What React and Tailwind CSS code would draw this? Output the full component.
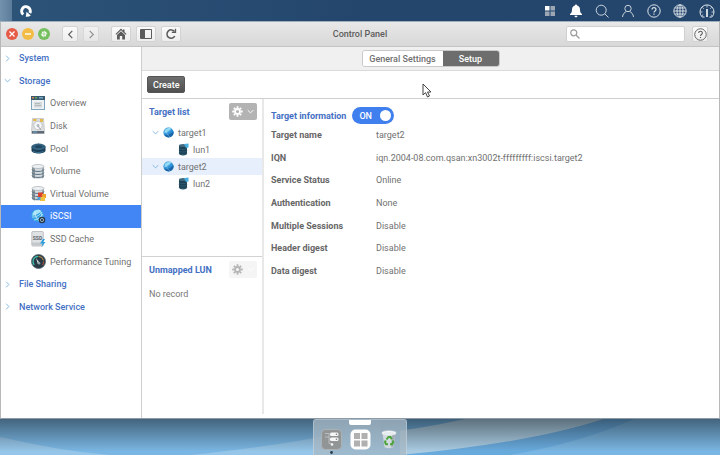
import { useState } from "react";
import clsx from "clsx";

const SIDEBAR = [
  { label: "System", group: true },
  { label: "Storage", group: true, open: true },
  { label: "Overview", icon: OverviewIcon },
  { label: "Disk", icon: DiskIcon },
  { label: "Pool", icon: PoolIcon },
  { label: "Volume", icon: VolumeIcon },
  { label: "Virtual Volume", icon: VirtualVolumeIcon },
  { label: "iSCSI", icon: IscsiIcon },
  { label: "SSD Cache", icon: SsdIcon },
  { label: "Performance Tuning", icon: GaugeIcon },
  { label: "File Sharing", group: true },
  { label: "Network Service", group: true },
];

const TARGETS = [
  { name: "target1", lun: "lun1" },
  { name: "target2", lun: "lun2" },
];

const DETAILS = [
  ["Target name", "target2"],
  ["IQN", "iqn.2004-08.com.qsan:xn3002t-fffffffff:iscsi.target2"],
  ["Service Status", "Online"],
  ["Authentication", "None"],
  ["Multiple Sessions", "Disable"],
  ["Header digest", "Disable"],
  ["Data digest", "Disable"],
];

/* ---------- icons ---------- */

function Chevron({ dir = "right", className }) {
  const paths = { right: "M3 1l4 4-4 4", left: "M7 1L3 5l4 4", down: "M1 3l4 4 4-4" };
  return (
    <svg viewBox="0 0 10 10" className={className} fill="none" stroke="currentColor" strokeWidth="1.300">
      <path d={paths[dir]} />
    </svg>
  );
}

function OverviewIcon() {
  return (
    <svg viewBox="0 0 14 14" className="size-[14px]">
      <rect x="0.5" y="0.5" width="13" height="13" fill="#eef2f5" stroke="#7fa5bd" />
      <rect width="14" height="4" fill="#3d5a6c" />
      <rect x="1" y="1" width="2" height="1.5" fill="#d9844f" />
      <rect x="4" y="1" width="2" height="1.5" fill="#68ab5c" />
      <rect x="8" y="1" width="4" height="1.5" fill="#6cacc9" />
      <rect x="3" y="6" width="8" height="5.5" fill="#d3d8db" />
      <path d="M4 7.500h5M4 9.500h6" stroke="#a5adb2" strokeWidth=".7" />
    </svg>
  );
}

function DiskIcon() {
  return (
    <svg viewBox="0 0 14 16" className="h-4 w-[14px]">
      <path d="M1.500 .5h11l1 12v3H.5v-3z" fill="#dcdedf" stroke="#b4b7b9" strokeWidth=".6" />
      <path d="M2 1h3.500v2H2zM9 1h3v3H9z" fill="#e4b94e" />
      <circle cx="7" cy="7.500" r="4.200" fill="#f4f5f6" stroke="#b4b8bb" strokeWidth=".7" />
      <circle cx="7" cy="7.500" r="1.400" fill="#b8bcc0" />
      <path d="M7 8l3 4" stroke="#9da1a5" />
      <rect x="1" y="13" width="12" height="2.500" fill="#5e6b76" />
      <path d="M2 14h4" stroke="#65a8d6" />
    </svg>
  );
}

function PoolIcon() {
  return (
    <svg viewBox="0 0 15 11" className="h-[11px] w-[15px]">
      <path d="M.5 3.500v4c0 4 14 4 14 0v-4z" fill="#1d4059" />
      <ellipse cx="7.500" cy="3.700" rx="7" ry="3.200" fill="#356482" />
      <ellipse cx="7.500" cy="3.700" rx="3.500" ry="1.400" fill="#20465f" />
      <path d="M2 8.200c3 1.800 7 1.800 10.500 .2" stroke="#4180a5" fill="none" strokeWidth=".8" />
      <path d="M7.500 .5v2M.7 3.700h3M11 3.700h3.300" stroke="#27506c" strokeWidth=".6" />
    </svg>
  );
}

function Cylinder() {
  return (
    <>
      <path d="M1 2.500v10c0 3 12 3 12 0v-10z" fill="#d5dade" />
      <path d="M1 2.500v10c0 1.200 2 1.800 3 2v-10z" fill="#8a949b" />
      <path d="M11 4.500v10c1-.3 2-.9 2-2v-10z" fill="#99a3aa" />
      <path
        d="M1 5.500c0 2.600 12 2.600 12 0M1 8.500c0 2.600 12 2.600 12 0M1 11.500c0 2.600 12 2.600 12 0"
        fill="none"
        stroke="#5c7585"
      />
      <ellipse cx="7" cy="2.500" rx="6" ry="2" fill="#edf0f2" stroke="#9aa3a9" strokeWidth=".6" />
    </>
  );
}

function VolumeIcon() {
  return (
    <svg viewBox="0 0 14 15" className="h-[15px] w-[14px]">
      <Cylinder />
    </svg>
  );
}

function VirtualVolumeIcon() {
  return (
    <svg viewBox="0 0 16 15" className="h-[15px] w-4">
      <Cylinder />
      <rect x="7" y="6.500" width="5" height="5.500" fill="#d9432f" />
      <rect x="11" y="8" width="4" height="4" fill="#f0a22e" />
      <rect x="9" y="11" width="5" height="4" fill="#f3c23c" />
      <rect x="6.500" y="11" width="3" height="3" fill="#4d9fd6" />
    </svg>
  );
}

function Globe({ className }) {
  return (
    <svg viewBox="0 0 14 14" className={className}>
      <circle cx="7" cy="7" r="6.500" fill="#2c90d6" />
      <path d="M1.500 10a6.500 6.500 0 0 0 11.300 0c.8-2 .8-3.500.2-5C11 8 7 11 1.500 10z" fill="#1a66a8" />
      <path d="M2 4.500C4 1 8 .2 10.500 1.500 9 4 6 6.500 2 7.500z" fill="#8fdaf5" />
      <path
        d="M1 7.500c4 .5 8-2 10-5.700M4 1.800c-.5 4 1.500 8.500 5 11.200"
        fill="none"
        stroke="#a5dcf5"
        strokeWidth=".5"
      />
    </svg>
  );
}

function IscsiIcon() {
  return (
    <svg viewBox="0 0 15 15" className="size-[15px]">
      <circle cx="6.500" cy="6.500" r="6.200" fill="#35a5e4" />
      <path d="M1.500 4.500C3 1 7 0 10 1.500 9 4 6 6 1.500 7z" fill="#a6e2f8" />
      <path
        d="M1 8c4 .5 8-2 10-5M3 11c4-.5 7-3 9-6M4 1.500c-.5 4 1 7.500 4 10.500M8 .8c2 2 3 5 2.500 8"
        fill="none"
        stroke="#d3f0fc"
        strokeWidth=".7"
      />
      <circle cx="11" cy="11" r="3.300" fill="#26394b" />
      <circle cx="11" cy="11" r="1.600" fill="none" stroke="#a9bccb" strokeWidth=".9" />
    </svg>
  );
}

function SsdIcon() {
  return (
    <svg viewBox="0 0 15 16" className="h-4 w-[15px]">
      <rect x=".8" y=".5" width="11.500" height="14.500" rx="1" fill="#dfe2e4" stroke="#a9adb0" strokeWidth=".7" />
      <rect x="1" y="11.500" width="11" height="3" fill="#c3c7ca" />
      <text
        x="6.500"
        y="8.500"
        textAnchor="middle"
        fontSize="5"
        fontWeight="700"
        fontFamily="Roboto, sans-serif"
        fill="#59646c"
      >
        SSD
      </text>
      <path d="M12 8l-3 4.500h2.500l-1 3.500 4-5h-2.300L14 8z" fill="#2b9fe0" />
    </svg>
  );
}

function GaugeIcon() {
  return (
    <svg viewBox="0 0 15 15" className="size-[15px]">
      <circle cx="7.500" cy="7.500" r="7" fill="#293a44" stroke="#56666f" strokeWidth=".8" />
      <path d="M3.300 11A5.200 5.200 0 0 1 7 2.400" fill="none" stroke="#3cc3b4" strokeWidth="1.100" />
      <path d="M7.500 2.400a5.200 5.200 0 0 1 5 4" fill="none" stroke="#d9a346" strokeWidth=".9" />
      <path d="M12.500 7.500A5 5 0 0 1 11.500 11" fill="none" stroke="#d2553c" strokeWidth=".9" />
      <path d="M5 4l4 5.500L7 10z" fill="#e8f2f4" />
      <circle cx="8" cy="9.300" r="1.300" fill="#8ea5ae" />
    </svg>
  );
}

function LunIcon() {
  return (
    <svg viewBox="0 0 11 13" className="h-[13px] w-[11px]">
      <path d="M1 2.500v8c0 2.500 8 2.500 8 0v-8z" fill="#1d4256" />
      <path
        d="M1 5c0 2 8 2 8 0M1 7.500c0 2 8 2 8 0M1 10c0 2 8 2 8 0"
        fill="none"
        stroke="#3d687f"
        strokeWidth=".6"
      />
      <ellipse cx="5" cy="2.500" rx="4" ry="1.500" fill="#416a80" />
      <path d="M6 1l4.500-.5v4L8 5z" fill="#48aee0" />
    </svg>
  );
}

function GearIcon({ className }) {
  return (
    <svg viewBox="0 0 12 12" className={className} fill="none" stroke="currentColor" strokeWidth="2">
      <circle cx="6" cy="6" r="2.700" />
      <path d="M6 .3v2M6 9.700v2M.3 6h2M9.700 6h2M2 2l1.400 1.400M8.600 8.600L10 10M10 2L8.600 3.400M3.400 8.600L2 10" />
    </svg>
  );
}

function QuestionIcon({ className }) {
  return (
    <svg viewBox="0 0 14 14" className={className} fill="none" stroke="currentColor">
      <circle cx="7" cy="7" r="6.200" />
      <path d="M5 5.500c0-2.600 4-2.600 4 0 0 1.400-2 1.500-2 3M7 9.600v1.200" strokeWidth="1.200" />
    </svg>
  );
}

/* ---------- menu bar ---------- */

const TRAY = [
  {
    name: "Monitor",
    icon: (
      <svg viewBox="0 0 14 14" className="size-[14px]">
        <path d="M2 2h4.500v4.500H2z" fill="#fff" />
        <path d="M7.500 2H12v4.500H7.500zM2 7.500h4.500V12H2zM7.500 7.500H12V12H7.500z" fill="#9da6b3" />
      </svg>
    ),
  },
  {
    name: "Notifications",
    icon: (
      <svg viewBox="0 0 14 14" className="size-[14px]" fill="#fff">
        <path d="M7 .5c.6 0 1 .4 1 1 2 .5 3 2 3 4 0 2.500.5 3.500 2 4.500v1H1v-1c1.500-1 2-2 2-4.500 0-2 1-3.500 3-4 0-.6.4-1 1-1zM5.500 11.800h3c0 2-3 2-3 0z" />
      </svg>
    ),
  },
  {
    name: "Search",
    icon: (
      <svg viewBox="0 0 14 14" className="size-[14px]" fill="none" stroke="#c8d2de">
        <circle cx="6.200" cy="6.200" r="5" />
        <path d="M9.800 9.800l3.700 3.700" />
      </svg>
    ),
  },
  {
    name: "Account",
    icon: (
      <svg viewBox="0 0 14 14" className="size-[14px]" fill="none" stroke="#c8d2de">
        <circle cx="7" cy="4.500" r="3.200" />
        <path d="M1.500 13c.3-3 2-4.700 4-5.500M12.500 13c-.3-3-2-4.700-4-5.500" />
      </svg>
    ),
  },
  { name: "Help", icon: <QuestionIcon className="size-[14px] text-[#dbe2ea]" /> },
  {
    name: "Language",
    icon: (
      <svg viewBox="0 0 14 14" className="size-[14px]" fill="none" stroke="#e3e9ef" strokeWidth=".9">
        <circle cx="7" cy="7" r="6.200" />
        <ellipse cx="7" cy="7" rx="3" ry="6.200" />
        <path d="M7 1v12M1 7h12M1.700 4h10.600M1.700 10h10.600" />
      </svg>
    ),
  },
  {
    name: "Dashboard",
    icon: (
      <svg viewBox="0 0 16 14" className="h-[14px] w-4" fill="none" stroke="#e3e9ef">
        <path d="M5.500 13H3.200A7 7 0 1 1 12.800 13h-2.300" />
        <path
          d="M8 1.500v2M3.500 3.500l1.200 1.200M12.500 3.500l-1.200 1.200M1.500 8h2M12.500 8h2M3 11.500l1.200-.7M13 11.500l-1.200-.7"
          strokeWidth=".8"
        />
        <path d="M8 5v8" strokeWidth="1.800" />
      </svg>
    ),
  },
];

function MenuBar() {
  return (
    <header className="flex h-[21px] shrink-0 items-center bg-gradient-to-r from-[#2c5378] via-[#24466d] to-[#24466c]">
      <div className="h-full w-3 bg-gradient-to-r from-[#7392ad] to-[#5b7c9a]" />
      <button type="button" aria-label="Main menu" className="ml-[7px]">
        <svg viewBox="0 0 14 14" className="size-[14px]" fill="none" stroke="#fff">
          <path d="M4.300 10.400A4.300 4.300 0 1 1 10.800 9" strokeWidth="3" />
          <path d="M7.500 7.800l4.300 3.700a6.500 6.500 0 0 1-5 1.200z" fill="#fff" stroke="none" />
        </svg>
      </button>
      <nav className="ml-auto flex items-center gap-3 pr-[5px]">
        {TRAY.map((item) => (
          <button key={item.name} type="button" aria-label={item.name}>
            {item.icon}
          </button>
        ))}
      </nav>
    </header>
  );
}

/* ---------- window ---------- */

function BarButton({ label, className, children }) {
  return (
    <button
      type="button"
      aria-label={label}
      className={clsx(
        "flex h-4 items-center justify-center rounded-[2px] border border-[#d3d3d3] bg-gradient-to-b from-[#fafafa] to-[#eeeeee] text-[#5c5c5c]",
        className
      )}
    >
      {children}
    </button>
  );
}

function TitleBar() {
  return (
    <div className="grid h-[25px] shrink-0 grid-cols-[1fr_auto_1fr] items-center border-b border-[#c4c4c4] bg-gradient-to-b from-[#e8e8e8] to-[#d8d8d8]">
      <div className="flex items-center pl-[5px]">
        <div className="flex gap-1">
          <button type="button" aria-label="Close">
            <svg viewBox="0 0 12 12" className="size-3" stroke="#fff" strokeWidth="1.200">
              <circle cx="6" cy="6" r="6" fill="#e65a46" stroke="none" />
              <path d="M3.500 3.500l5 5M8.500 3.500l-5 5" />
            </svg>
          </button>
          <button type="button" aria-label="Minimize">
            <svg viewBox="0 0 12 12" className="size-3" stroke="#fff" strokeWidth="1.400">
              <circle cx="6" cy="6" r="6" fill="#f3bd45" stroke="none" />
              <path d="M3 6h6" />
            </svg>
          </button>
          <button type="button" aria-label="Maximize">
            <svg viewBox="0 0 12 12" className="size-3" fill="#fff">
              <circle cx="6" cy="6" r="6" fill="#76bf5e" />
              <path d="M6.300 2.500v3.200h3.200L8.300 4.500zM5.700 9.500V6.300H2.500l1.200 1.200zM4.500 3.500h1.200v2.200H3.500zM7.500 8.500H6.300V6.300h2.200z" />
            </svg>
          </button>
        </div>
        <BarButton label="Back" className="ml-3 w-4">
          <Chevron dir="left" className="size-[9px]" />
        </BarButton>
        <BarButton label="Forward" className="ml-[5px] w-4 opacity-60">
          <Chevron className="size-[9px]" />
        </BarButton>
        <BarButton label="Home" className="ml-3 w-5">
          <svg viewBox="0 0 12 12" className="size-3" fill="currentColor">
            <path d="M6 .5L.5 6l.8.8L6 2.200l4.700 4.600.8-.8L9.500 4V1.500H8v1z" />
            <path d="M6 3.200L2 7v4.500h2.800V8h2.400v3.500H10V7z" />
          </svg>
        </BarButton>
        <BarButton label="Toggle sidebar" className="ml-[5px] w-5">
          <svg viewBox="0 0 12 12" className="size-3">
            <path d="M.5 1.500h11v9H.5z" fill="none" stroke="currentColor" />
            <path d="M1 2h4v8H1z" fill="currentColor" />
          </svg>
        </BarButton>
        <BarButton label="Reload" className="ml-[5px] w-5">
          <svg viewBox="0 0 12 12" className="size-3" fill="none" stroke="currentColor" strokeWidth="1.500">
            <path d="M9.800 8.200A4.200 4.200 0 1 1 9.500 3.500" />
            <path d="M10.500 .8v3.600H6.800" strokeWidth="1.300" />
          </svg>
        </BarButton>
      </div>
      <h1 className="font-medium text-[#5c5c5c]">Control Panel</h1>
      <div className="flex items-center justify-end gap-[7px] pr-[11px]">
        <label className="flex h-4 w-[119px] items-center rounded-[2px] border border-[#d0d0d0] bg-white pl-[3px]">
          <svg viewBox="0 0 10 10" className="size-[10px]" fill="none" stroke="#999" strokeWidth="1.200">
            <circle cx="3.800" cy="3.800" r="3" />
            <path d="M6 6l3.500 3.500" />
          </svg>
          <input type="search" aria-label="Search settings" className="min-w-0 flex-1 px-1 outline-none" />
        </label>
        <BarButton label="Help" className="w-4">
          <QuestionIcon className="size-[13px] shrink-0" />
        </BarButton>
      </div>
    </div>
  );
}

function Sidebar({ selected, onSelect }) {
  return (
    <nav className="w-[141px] shrink-0 border-r border-[#cdcdcd]">
      <ul className="grid h-[271px] auto-rows-fr">
        {SIDEBAR.map(({ label, icon: Icon, group, open }) => (
          <li key={label}>
            <button
              type="button"
              onClick={() => !group && onSelect(label)}
              className={clsx(
                "flex size-full items-center text-left",
                group && "font-medium text-[#4470c4]",
                !group && selected === label && "bg-[#4285f4] font-medium text-[#eaf2ff]"
              )}
            >
              {group ? (
                <>
                  <Chevron dir={open ? "down" : "right"} className="mr-2 ml-[3px] size-[7px] text-[#79b3e0]" />
                  {label}
                </>
              ) : (
                <>
                  <span className="ml-7 flex w-[21px] items-center pl-[2px]">
                    <Icon />
                  </span>
                  {label}
                </>
              )}
            </button>
          </li>
        ))}
      </ul>
    </nav>
  );
}

function GearMenu({ label, disabled }) {
  return (
    <button
      type="button"
      aria-label={label}
      disabled={disabled}
      className={clsx(
        "flex h-[17px] w-7 items-center gap-1 rounded-[2px] pl-[3px]",
        disabled ? "bg-[#f5f5f5] text-[#b5b5b5]" : "bg-[#b3b3b3] text-white"
      )}
    >
      <GearIcon className="size-[11px]" />
      <Chevron dir="down" className={clsx("size-[7px]", disabled && "text-white")} />
    </button>
  );
}

function TargetList() {
  const [current, setCurrent] = useState("target2");

  return (
    <div className="mb-1 w-[122px] shrink-0 border-r-2 border-[#e8e8e8]">
      <section className="h-[158px] border-b border-[#d2d2d2] pt-1">
        <div className="mb-1 flex items-center justify-between pr-[5px] pl-[7px]">
          <h2 className="font-bold text-[#4470c4]">Target list</h2>
          <GearMenu label="Target actions" />
        </div>
        <ul>
          {TARGETS.map((t) => (
            <li key={t.name}>
              <button
                type="button"
                onClick={() => setCurrent(t.name)}
                className={clsx(
                  "flex h-[17px] w-full items-center pl-[10px]",
                  current === t.name && "bg-[#e8effc]"
                )}
              >
                <Chevron dir="down" className="mr-1 size-[7px] text-[#79b3e0]" />
                <Globe className="mr-1 size-[11px]" />
                {t.name}
              </button>
              <div className="flex h-[17px] items-center gap-1 pl-9">
                <LunIcon />
                {t.lun}
              </div>
            </li>
          ))}
        </ul>
      </section>
      <section className="pt-1">
        <div className="mb-2 flex items-center justify-between pr-[5px] pl-[7px]">
          <h2 className="font-bold text-[#4470c4]">Unmapped LUN</h2>
          <GearMenu label="LUN actions" disabled />
        </div>
        <p className="pl-[7px] leading-[17px] text-[#777]">No record</p>
      </section>
    </div>
  );
}

function TargetInfo() {
  const [on, setOn] = useState(true);

  return (
    <section className="min-w-0 flex-1 pt-2 pl-[7px]">
      <div className="flex items-center gap-[6px]">
        <h2 className="font-bold text-[#4470c4]">Target information</h2>
        <label
          className={clsx(
            "flex h-[17px] w-[42px] items-center justify-between rounded-full pr-[3px] pl-[7px] font-medium text-white",
            on ? "bg-[#3f80ee]" : "bg-[#aaa]"
          )}
        >
          <input
            type="checkbox"
            role="switch"
            aria-label="Target enabled"
            checked={on}
            onChange={(e) => setOn(e.target.checked)}
            className="sr-only"
          />
          {on ? "ON" : "OFF"}
          <span className="size-[11px] rounded-full bg-white" />
        </label>
      </div>
      <dl className="grid h-[158px] auto-rows-fr grid-cols-[105px_1fr] items-center">
        {DETAILS.map(([name, value]) => (
          <div key={name} className="contents">
            <dt className="font-bold text-[#666]">{name}</dt>
            <dd>{value}</dd>
          </div>
        ))}
      </dl>
    </section>
  );
}

function ControlPanel() {
  const [selected, setSelected] = useState("iSCSI");
  const [tab, setTab] = useState("Setup");

  return (
    <main className="flex flex-1 flex-col border border-t-[#9eb0c0] border-r-[#b8b8b8] border-b-[#8d9aa5] border-l-[#b8b8b8] bg-white">
      <TitleBar />
      <div className="flex flex-1">
        <Sidebar selected={selected} onSelect={setSelected} />
        <div className="flex min-w-0 flex-1 flex-col">
          <div className="flex h-6 items-center justify-center border-b border-[#dadada] bg-[#f0f0f0]">
            <div className="flex h-[17px] overflow-hidden rounded-[3px] border border-[#c9c9c9]">
              {["General Settings", "Setup"].map((name) => (
                <button
                  key={name}
                  type="button"
                  onClick={() => setTab(name)}
                  className={clsx(
                    "font-medium",
                    name === "Setup" ? "w-14" : "w-20",
                    tab === name ? "bg-[#6d6d6d] text-white" : "bg-white text-[#707070]"
                  )}
                >
                  {name}
                </button>
              ))}
            </div>
          </div>
          <div className="flex h-7 items-center border-b border-[#cfcfcf] pl-[5px]">
            <button
              type="button"
              className="h-[17px] rounded-[2px] border border-[#555] bg-gradient-to-b from-[#6f6f6f] to-[#505050] px-[5px] font-medium text-white"
            >
              Create
            </button>
          </div>
          <div className="flex flex-1">
            <TargetList />
            <TargetInfo />
          </div>
        </div>
      </div>
    </main>
  );
}

/* ---------- dock ---------- */

function Dock() {
  return (
    <footer className="relative flex h-9 shrink-0 justify-center bg-gradient-to-b from-black/45 to-transparent to-90%">
      <div className="flex w-[94px] flex-col items-center rounded-t-[3px] border border-b-0 border-white/25 bg-[#a8b9c6]/75">
        <div className="h-[5px] w-[22px] rounded-b-[2px] bg-white" />
        <div className="flex flex-1 gap-2 pt-1">
          <button type="button" aria-label="Control Panel">
            <svg viewBox="0 0 21 26" className="h-[26px] w-[21px]">
              <rect x=".5" y=".5" width="20" height="20" rx="4" fill="#929596" stroke="#adb2b5" />
              <path d="M4 4.500h4M4 8h4M8 4.500v10h3M8 10h3" stroke="#b9bcbe" fill="none" />
              <rect x="9" y="3.500" width="8.500" height="3.500" rx="1.500" fill="#f6f6f6" />
              <rect x="9" y="8.500" width="8.500" height="3.500" rx="1.500" fill="#f6f6f6" />
              <circle cx="11" cy="15.500" r="1.300" fill="#f6f6f6" />
              <circle cx="15.500" cy="5.200" r=".8" fill="#7b7e80" />
              <circle cx="15.500" cy="10.200" r=".8" fill="#7b7e80" />
              <circle cx="10.500" cy="23.500" r="1.400" fill="#2b3d4d" />
            </svg>
          </button>
          <button type="button" aria-label="Applications">
            <svg viewBox="0 0 21 26" className="h-[26px] w-[21px]">
              <rect x=".5" y=".5" width="20" height="20" rx="5" fill="#fdfdfd" />
              <path d="M4 4h6v6H4zM11.500 4h6v6h-6zM4 11.500h6v6H4zM11.500 11.500h6v6h-6z" fill="#b0b0b0" />
            </svg>
          </button>
          <button type="button" aria-label="Recycle Bin">
            <svg viewBox="0 0 21 26" className="h-[26px] w-[21px]">
              <path d="M3.500 4l2 14c1 1.500 8 1.500 9 0l2-14z" fill="#d3dadf" />
              <path d="M13 5l-1 13.500c1-.2 2-.4 2.500-1L16.500 4z" fill="#a6afb6" />
              <ellipse cx="10" cy="4" rx="7.200" ry="2.300" fill="#f7f9fa" stroke="#d0d6da" strokeWidth=".6" />
              <ellipse cx="10" cy="4.300" rx="5.500" ry="1.200" fill="#e6ebee" />
              <path
                d="M7.500 10.500l2-2.500h2l1.300 2.300M13.700 11.500l.6 1.500-1.300 2.300H11M9 15.300H7L6 13l.8-1.500"
                fill="none"
                stroke="#4ca53a"
                strokeWidth="2"
              />
            </svg>
          </button>
        </div>
      </div>
    </footer>
  );
}

function Wallpaper() {
  return (
    <svg viewBox="0 0 720 36" preserveAspectRatio="none" className="absolute inset-x-0 bottom-0 h-9 w-full">
      <rect width="720" height="36" fill="#7ab6e3" />
      <path d="M0 18Q60 32 110 36H0z" fill="#95c5e8" />
      <path d="M190 36Q270 28 330 16V36z" fill="#95c5e8" />
      <path d="M400 0H604Q530 24 440 33L400 36z" fill="#a9cbe2" />
      <path d="M380 0H465Q420 10 380 14z" fill="#6fabd9" />
      <path d="M604 0H634Q580 24 510 36H400Q530 24 604 0z" fill="#69aadd" />
    </svg>
  );
}

export default function App() {
  return (
    <div className="relative isolate flex min-h-screen flex-col overflow-hidden bg-[#7ab6e3] font-['Roboto',sans-serif] text-[9px] leading-3 text-[#717171]">
      <Wallpaper />
      <div className="relative flex flex-1 flex-col">
        <MenuBar />
        <ControlPanel />
      </div>
      <Dock />
      {/* mouse pointer */}
      <svg viewBox="0 0 10 15" className="pointer-events-none absolute top-[83px] left-[422px] h-[15px] w-[10px]">
        <path d="M1 1v11l2.600-2.400L5.500 14l2-1-2-4H9z" fill="#fff" stroke="#444" />
      </svg>
    </div>
  );
}
